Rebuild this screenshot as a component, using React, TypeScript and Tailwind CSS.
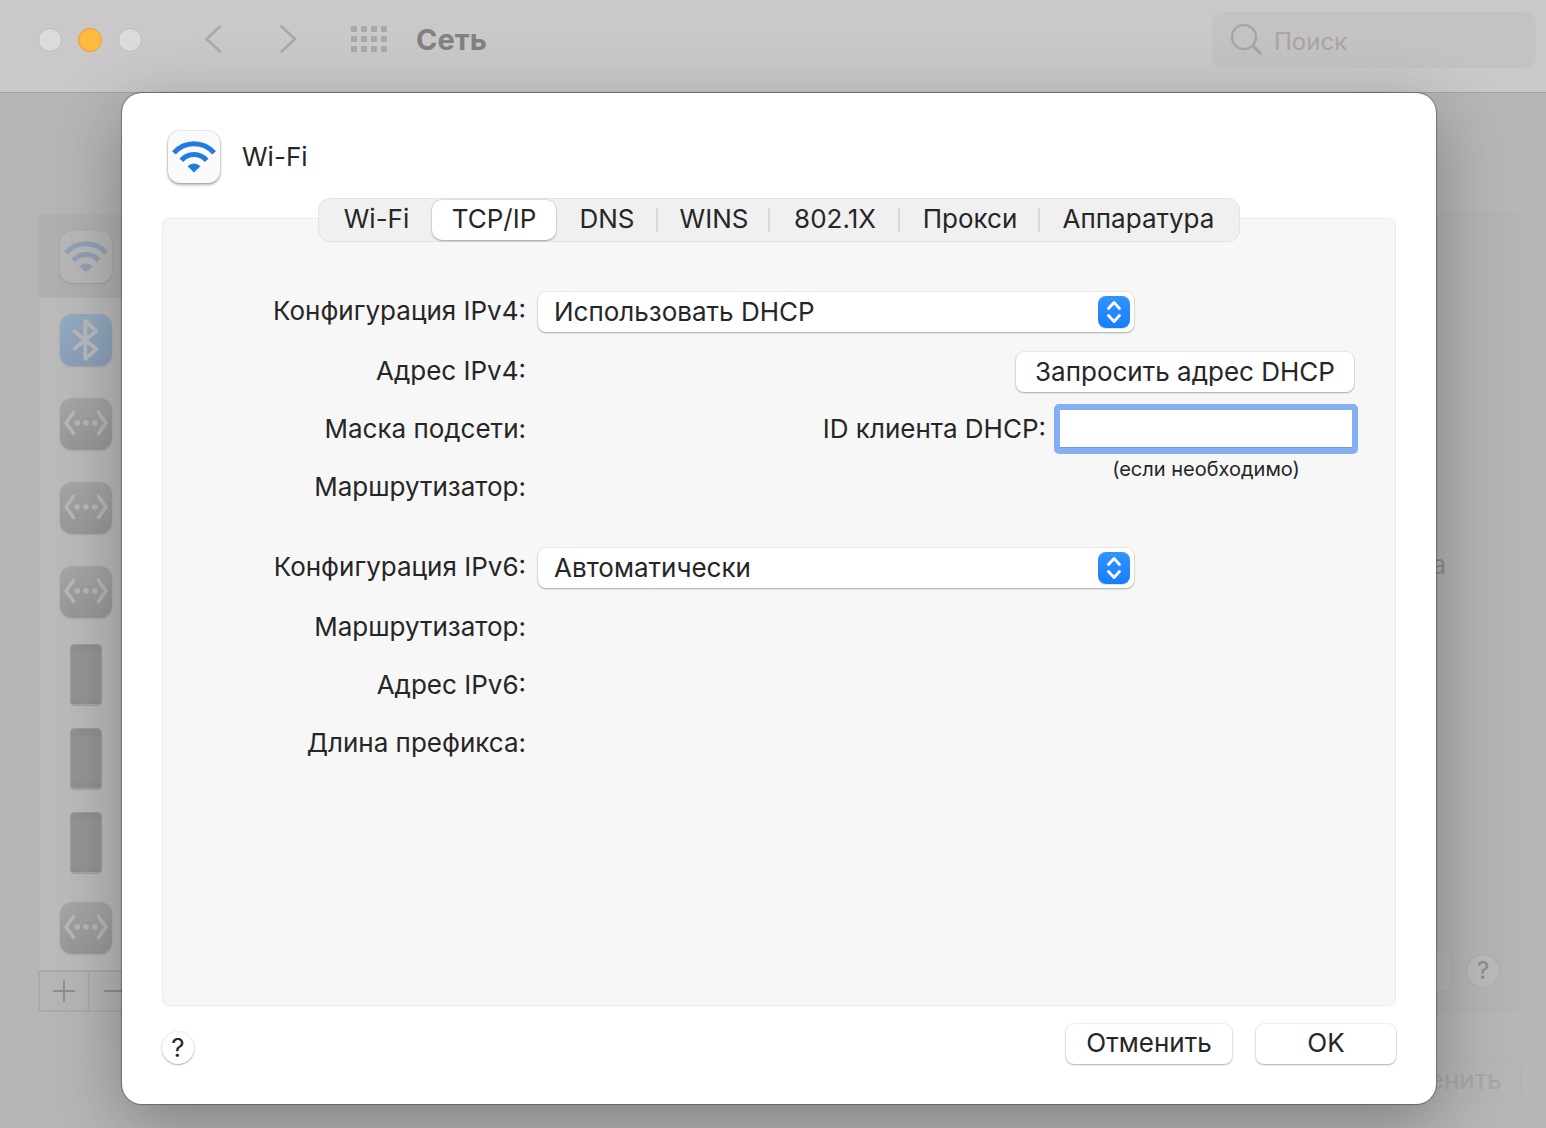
import React from "react";

function WifiGlyph({ className }: { className: string }) {
  return (
    <svg viewBox="0 0 52 52" className={className} aria-hidden="true">
      <g fill="none" stroke="currentColor" strokeWidth="5">
        <path d="M5.9 21.9A26.6 26.6 0 0 1 46.1 21.9" />
        <path d="M13.4 29.4A16.4 16.4 0 0 1 38.6 29.4" />
      </g>
      <path fill="currentColor" d="M26 41.6L19.6 35.2A8.8 8.8 0 0 1 32.4 35.2Z" />
    </svg>
  );
}

function WifiIcon() {
  return (
    <div className="size-[52px] rounded-xl bg-[#b8b8b8] text-[#90a2b6] shadow-[0_0_1px_rgba(0,0,0,0.1),0_1px_2px_rgba(0,0,0,0.1)]">
      <WifiGlyph className="size-full" />
    </div>
  );
}

function BluetoothIcon() {
  return (
    <div className="size-[52px] rounded-xl bg-linear-to-b from-[#94abc0] to-[#8ba0b9] shadow-[0_1px_2px_rgba(0,0,0,0.12)]">
      <svg viewBox="0 0 52 52" className="size-full" aria-hidden="true">
        <path
          d="M14.5 17.5L36.5 35L25.3 45V7L36.5 17L14.5 34.5"
          fill="none"
          stroke="#bbb"
          strokeWidth="3.8"
          strokeLinecap="round"
          strokeLinejoin="round"
        />
      </svg>
    </div>
  );
}

function EthernetIcon() {
  return (
    <div className="size-[52px] rounded-xl bg-linear-to-b from-[#a6a6a6] to-[#989898] shadow-[0_1px_2px_rgba(0,0,0,0.1)]">
      <svg viewBox="0 0 52 52" className="size-full" aria-hidden="true">
        <path
          d="M13.5 14.5L6 25L13.5 35.5M38.5 14.5L46 25L38.5 35.5"
          fill="none"
          stroke="#b8b8b8"
          strokeWidth="3.6"
          strokeLinecap="round"
          strokeLinejoin="round"
        />
        <g fill="#b8b8b8">
          <circle cx="17.2" cy="25" r="2.8" />
          <circle cx="26" cy="25" r="2.8" />
          <circle cx="34.8" cy="25" r="2.8" />
        </g>
      </svg>
    </div>
  );
}

function PhoneIcon() {
  return (
    <svg viewBox="0 0 52 62" className="mb-0.5 h-[62px] w-[52px]" aria-hidden="true">
      <rect x="10.5" y="0.5" width="31" height="61" rx="4" fill="#919191" stroke="#9e9e9e" />
      <rect x="11" y="8" width="30" height="46" fill="#959595" />
      <circle cx="26" cy="57" r="2" fill="none" stroke="#9b9b9b" strokeWidth="0.8" />
      <path d="M13 60.5H39" stroke="#a8a8a8" strokeWidth="1" />
    </svg>
  );
}

const services: { id: string; name: string; icon: () => React.JSX.Element }[] = [
  { id: "wifi", name: "Wi-Fi", icon: WifiIcon },
  { id: "bt", name: "Bluetooth", icon: BluetoothIcon },
  { id: "eth1", name: "Ethernet 1", icon: EthernetIcon },
  { id: "eth2", name: "Ethernet 2", icon: EthernetIcon },
  { id: "eth3", name: "Ethernet 3", icon: EthernetIcon },
  { id: "ph1", name: "iPhone 1", icon: PhoneIcon },
  { id: "ph2", name: "iPhone 2", icon: PhoneIcon },
  { id: "ph3", name: "iPhone 3", icon: PhoneIcon },
  { id: "eth4", name: "Ethernet 4", icon: EthernetIcon },
];

const tabs = [
  { label: "Wi-Fi", divider: false },
  { label: "TCP/IP", divider: false },
  { label: "DNS", divider: true },
  { label: "WINS", divider: true },
  { label: "802.1X", divider: true },
  { label: "Прокси", divider: true },
  { label: "Аппаратура", divider: false },
];

const raised = "bg-white shadow-[0_0_1px_1px_rgba(0,0,0,0.06),0_1px_2px_rgba(0,0,0,0.28)]";

function TitleBar() {
  return (
    <header className="flex h-[93px] shrink-0 items-start border-b border-[#a3a3a3] bg-[#cac8c9] pr-2.5">
      <div className="flex h-20 items-center gap-4 pl-[38px]">
        <button aria-label="Закрыть" className="size-6 rounded-full border border-[#bcbabb] bg-[#dddadb]" />
        <button aria-label="Свернуть" className="size-6 rounded-full border border-[#e09f35] bg-[#fdba41]" />
        <button aria-label="Развернуть" className="size-6 rounded-full border border-[#bcbabb] bg-[#dddadb]" />
      </div>
      <nav className="flex h-[78px] items-center pl-[61px] text-[#aaa8a9]">
        <button aria-label="Назад">
          <svg width="20" height="32" viewBox="0 0 20 32" fill="none" stroke="currentColor" strokeWidth="2.6" strokeLinecap="round" strokeLinejoin="round">
            <path d="M17 3.5L3.5 16L17 28.5" />
          </svg>
        </button>
        <button aria-label="Вперед" className="ml-14">
          <svg width="20" height="32" viewBox="0 0 20 32" fill="none" stroke="currentColor" strokeWidth="2.6" strokeLinecap="round" strokeLinejoin="round">
            <path d="M2.5 3.5L16 16L2.5 28.5" />
          </svg>
        </button>
        <button aria-label="Показать все" className="ml-[52px] grid grid-cols-4 gap-1">
          {Array.from({ length: 12 }, (_, i) => (
            <span key={i} className="size-1.5 rounded-[1px] bg-[#aaa8a9]" />
          ))}
        </button>
      </nav>
      <h1 className="pl-[29px] text-[29px] leading-[80px] font-bold text-[#828182]">Сеть</h1>
      <label className="mt-3 ml-auto flex h-14 w-[324px] items-center rounded-xl bg-[#c4c2c3] pl-[18px] text-[#a7a5a6]">
        <svg width="34" height="34" viewBox="0 0 34 34" fill="none" stroke="currentColor" strokeLinecap="round" aria-hidden="true">
          <circle cx="14" cy="14" r="12" strokeWidth="2.4" />
          <path d="M23 23L30.5 30.5" strokeWidth="3" />
        </svg>
        <input
          type="search"
          aria-label="Поиск"
          placeholder="Поиск"
          className="ml-2.5 h-10 min-w-0 flex-1 bg-transparent pt-0.5 text-[24px] outline-none placeholder:text-[#a7a5a6]"
        />
      </label>
    </header>
  );
}

function NetworkPane() {
  return (
    <main className="flex flex-1 flex-col bg-[#b6b6b6] pt-[120px] pr-[26px] pb-7 pl-[38px]">
      <div className="flex h-[799px] gap-6">
        <aside className="flex w-[420px] flex-col">
          <ul className="flex-1 border-x border-t border-[#b2b2b2] bg-[#bbb]">
            {services.map(({ id, name, icon: Icon }) => (
              <li
                key={id}
                aria-label={name}
                className={
                  id === "wifi"
                    ? "flex h-[84px] items-center bg-[#b0b0b0] pt-0.5 pl-[21px]"
                    : "flex h-[84px] items-center pl-[21px]"
                }
              >
                <Icon />
              </li>
            ))}
          </ul>
          <div className="flex h-[42px] border-2 border-[#ababab] text-[#8f8f8f]">
            <button aria-label="Добавить" className="flex w-[50px] items-center justify-center border-r-2 border-[#ababab]">
              <svg width="22" height="22" viewBox="0 0 22 22" stroke="currentColor" strokeWidth="2" strokeLinecap="round">
                <path d="M1 11H21M11 1V21" />
              </svg>
            </button>
            <button aria-label="Удалить" className="flex w-[50px] items-center justify-center">
              <svg width="22" height="22" viewBox="0 0 22 22" stroke="currentColor" strokeWidth="2" strokeLinecap="round">
                <path d="M1 11H21" />
              </svg>
            </button>
          </div>
        </aside>
        <section className="flex flex-1 flex-col rounded-lg border border-[#b1b1b1] bg-[#b4b4b4] pr-5 pb-5">
          <p className="mt-[333px] pr-[53px] text-right text-[26px] leading-9 text-[#8f8f8f]">а</p>
          <div className="mt-auto flex items-center justify-end gap-4">
            <button aria-label="Дополнительно" className="h-10 w-52 rounded-lg bg-[#b7b7b7] shadow-[0_0_2px_rgba(0,0,0,0.1)]" />
            <button className="size-8 rounded-full bg-[#bbb] text-[24px] leading-8 font-medium text-[#8f8f8f] shadow-[0_0_2px_rgba(0,0,0,0.12)]">?</button>
          </div>
        </section>
      </div>
      <div className="mt-12 flex justify-end">
        <button className="h-10 w-[180px] rounded-lg bg-[#b6b6b6] text-[26px] leading-10 text-[#a7a7a7] shadow-[0_0_2px_rgba(0,0,0,0.1)]">
          Применить
        </button>
      </div>
    </main>
  );
}

function PopUp({ id, options }: { id: string; options: string[] }) {
  return (
    <div className={`relative h-10 w-[596px] rounded-lg ${raised}`}>
      <select id={id} className="size-full appearance-none rounded-lg bg-transparent pr-12 pb-0.5 pl-4 outline-none">
        {options.map((o) => (
          <option key={o}>{o}</option>
        ))}
      </select>
      <span className="pointer-events-none absolute top-1 right-1 flex size-8 items-center justify-center rounded-lg bg-linear-to-b from-[#3293fb] to-[#147efb] shadow-[0_1px_1px_rgba(0,0,0,0.12)]">
        <svg width="32" height="32" viewBox="0 0 32 32" fill="none" stroke="white" strokeWidth="2.8" strokeLinecap="round" strokeLinejoin="round">
          <path d="M10.5 12.5L16 6.5L21.5 12.5M10.5 19.5L16 25.5L21.5 19.5" />
        </svg>
      </span>
    </div>
  );
}

function TcpIpPanel() {
  return (
    <section className="-mt-6 flex flex-1 flex-col gap-10 rounded-lg border border-[#e9e9e9] bg-[#f7f7f7] pt-[73px] pr-[41px]">
      <div className="flex gap-3">
        <div className="flex w-[363px] shrink-0 flex-col gap-[18px] text-right leading-[38px]">
          <label htmlFor="ipv4" className="mb-0.5 h-10">Конфигурация IPv4:</label>
          <span className="h-10">Адрес IPv4:</span>
          <span className="h-10">Маска подсети:</span>
          <span className="h-10">Маршрутизатор:</span>
        </div>
        <div className="flex flex-1 flex-col">
          <PopUp id="ipv4" options={["Использовать DHCP", "Вручную", "Выключено"]} />
          <button className={`mt-5 h-10 w-[338px] self-end rounded-lg leading-[38px] ${raised}`}>Запросить адрес DHCP</button>
          <div className="-mr-1 mt-3 flex items-center justify-end gap-2">
            <label htmlFor="client" className="leading-[50px]">ID клиента DHCP:</label>
            <input
              id="client"
              type="text"
              className="h-[50px] w-[304px] rounded-[5px] border-6 border-[#84aff2] bg-white px-2 shadow-[inset_0_-1px_0_#6f9be0] outline-none"
            />
          </div>
          <p className="mt-1 w-[296px] self-end text-center text-[20px] leading-[22px]">(если необходимо)</p>
        </div>
      </div>
      <div className="flex gap-3">
        <div className="flex w-[363px] shrink-0 flex-col gap-[18px] text-right leading-[38px]">
          <label htmlFor="ipv6" className="mb-0.5 h-10">Конфигурация IPv6:</label>
          <span className="h-10">Маршрутизатор:</span>
          <span className="h-10">Адрес IPv6:</span>
          <span className="h-10">Длина префикса:</span>
        </div>
        <PopUp id="ipv6" options={["Автоматически", "Вручную", "Только локальный канал"]} />
      </div>
    </section>
  );
}

function SettingsSheet() {
  return (
    <div
      role="dialog"
      aria-label="Wi-Fi"
      className="absolute top-[93px] right-[110px] bottom-6 left-[122px] flex flex-col rounded-[20px] bg-white px-10 pt-[37px] pb-10 text-[26px] text-[#262626] shadow-[0_0_1px_1px_rgba(0,0,0,0.3),0_20px_70px_rgba(0,0,0,0.3)]"
    >
      <div className="flex items-center gap-[22px] pl-1.5">
        <div className="size-[52px] rounded-xl bg-[#fafafa] text-[#217cdf] shadow-[0_0_1px_1px_rgba(0,0,0,0.1),0_2px_3px_rgba(0,0,0,0.3)]">
          <WifiGlyph className="size-full" />
        </div>
        <h2 className="leading-[54px]">Wi-Fi</h2>
      </div>
      <div
        role="tablist"
        className="relative mt-3.5 grid h-11 grid-cols-[111px_124px_102px_112px_130px_140px_197px] self-center rounded-xl border border-[#e3e3e3] bg-[#f0f0f0] px-0.5 py-px"
      >
        {tabs.map(({ label, divider }) => (
          <button
            key={label}
            role="tab"
            aria-selected={label === "TCP/IP"}
            className={
              label === "TCP/IP"
                ? `h-10 rounded-[10px] leading-[38px] pb-0.5 ${raised}`
                : "relative h-10 pb-0.5 leading-[38px]"
            }
          >
            {label}
            {divider && <span className="absolute top-2 right-0 h-6 w-0.5 bg-[#dadada]" />}
          </button>
        ))}
      </div>
      <TcpIpPanel />
      <footer className="mt-[18px] flex items-center">
        <button aria-label="Справка" className={`mt-2 size-8 rounded-full text-[26px] leading-8 ${raised}`}>?</button>
        <button className={`ml-auto h-10 w-[166px] rounded-lg pb-0.5 leading-[38px] ${raised}`}>Отменить</button>
        <button className={`ml-6 h-10 w-[140px] rounded-lg pb-0.5 leading-[38px] ${raised}`}>OK</button>
      </footer>
    </div>
  );
}

export default function App() {
  return (
    <div className="relative flex min-h-screen flex-col overflow-hidden font-['Inter','Noto_Sans',sans-serif]">
      <TitleBar />
      <NetworkPane />
      <SettingsSheet />
    </div>
  );
}
